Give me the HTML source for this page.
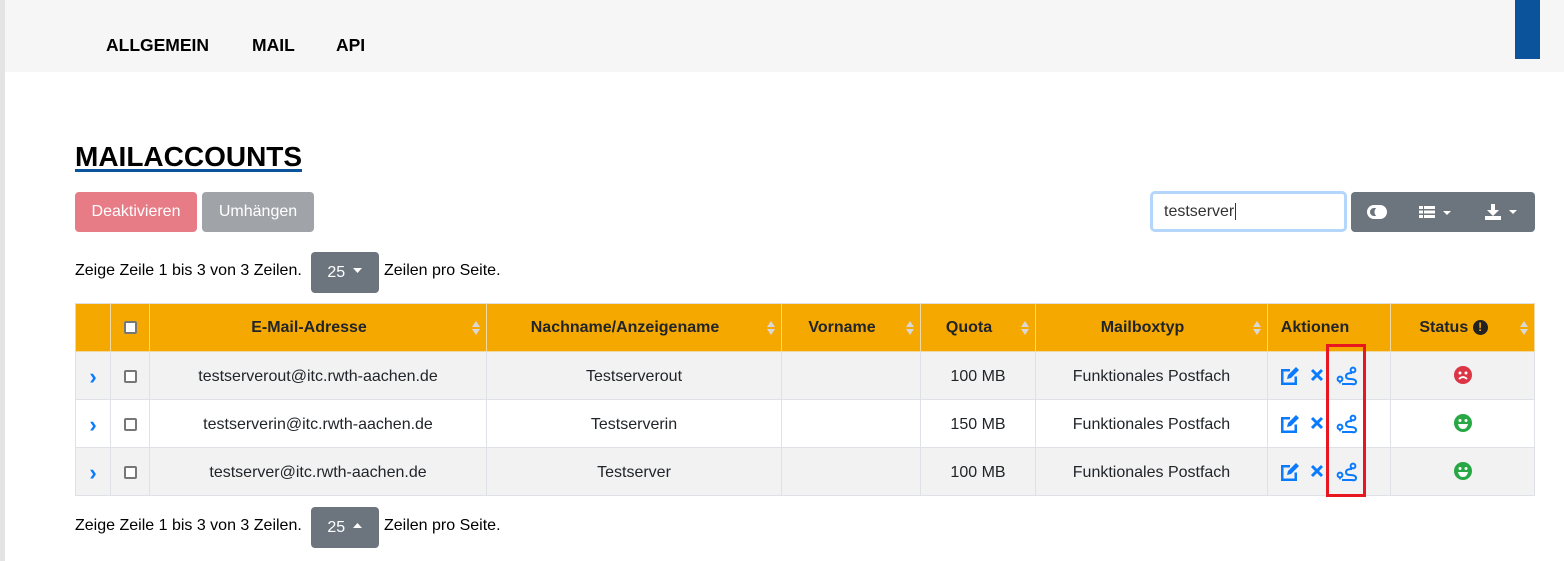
<!DOCTYPE html><html><head><meta charset="utf-8"><style>
*{box-sizing:border-box;margin:0;padding:0}
body{width:1564px;height:561px;position:relative;background:#fff;font-family:"Liberation Sans",sans-serif;color:#212529;overflow:hidden}
.a{position:absolute}
.nav{font-weight:bold;font-size:17.5px;color:#000;top:35px}
table{position:absolute;left:75px;top:303px;border-collapse:collapse;font-size:16px;table-layout:fixed}
td,th{border:1px solid #dee2e6;text-align:center;padding:0;position:relative}
th{background:#f5a800;height:48px;font-weight:bold;border-color:#f0d9a0;border-top:1px solid #dee2e6;padding-right:18px}
th.n{padding-right:0}
tr.r td{height:48px;padding-top:3px}
tr.g td{background:#f2f2f2}
.cb{display:inline-block;width:13px;height:13px;border:2px solid #777;border-radius:2px;background:#fff;vertical-align:middle}
.so{position:absolute;right:6px;top:17px;width:8px;height:14px}
.chev{color:#0a7bff;font-weight:bold;font-size:22px}
.btn{border-radius:4px;color:#fff;font-size:16px;text-align:center}
</style></head><body>
<div class="a" style="left:0;top:0;width:5px;height:561px;background:#e4e4e4"></div>
<div class="a" style="left:5px;top:0;width:1559px;height:72px;background:#f6f6f6"></div>
<div class="a" style="left:1515px;top:0;width:25px;height:59px;background:#0b549c"></div>
<div class="a nav" style="left:106px">ALLGEMEIN</div>
<div class="a nav" style="left:252px">MAIL</div>
<div class="a nav" style="left:336px">API</div>
<div class="a" style="left:75px;top:141px;font-size:28px;font-weight:bold;color:#000">MAILACCOUNTS</div>
<div class="a" style="left:75px;top:169px;width:227px;height:3px;background:#0b549c"></div>
<div class="a btn" style="left:75px;top:192px;width:122px;height:40px;line-height:40px;background:#e77c86">Deaktivieren</div>
<div class="a btn" style="left:202px;top:192px;width:112px;height:40px;line-height:40px;background:#a0a4a9">Umhängen</div>
<div class="a" style="left:1150px;top:191px;width:197px;height:41px;border:3px solid #b5d6fb;border-radius:5px;background:#fff;font-size:16px;line-height:35px;padding-left:11px;color:#333">testserver<span style="border-left:1px solid #333;margin-left:1px"></span></div>
<div class="a" style="left:1351px;top:192px;width:184px;height:40px;background:#6c757d;border-radius:4px"></div>
<svg class="a" style="left:1367px;top:204px" width="20" height="16"><rect x="1.5" y="2.5" width="17" height="11" rx="5.5" fill="none" stroke="#fff" stroke-width="3"/><circle cx="13" cy="8" r="5.5" fill="#fff"/></svg>
<svg class="a" style="left:1418px;top:205px" width="36" height="14"><g fill="#fff"><rect x="1" y="1" width="16" height="3"/><rect x="1" y="5.5" width="16" height="3"/><rect x="1" y="10" width="16" height="3"/><path d="M25 6h8l-4 4z"/></g><g stroke="#6c757d"><line x1="5.5" y1="0" x2="5.5" y2="14"/></g></svg>
<svg class="a" style="left:1484px;top:204px" width="36" height="17"><g fill="#fff"><path d="M7 0h4v6h4l-6 6-6-6h4z"/><rect x="1" y="12" width="16" height="4"/><path d="M25 6h8l-4 4z"/></g></svg>
<div class="a" style="left:75px;top:262px;font-size:16px;color:#000">Zeige Zeile 1 bis 3 von 3 Zeilen.</div>
<div class="a btn" style="left:311px;top:252px;width:68px;height:41px;line-height:41px;background:#6c757d">25 <svg width="10" height="6" style="margin-left:3px;vertical-align:3px"><path d="M0 0h9l-4.5 5z" fill="#fff"/></svg></div>
<div class="a" style="left:384px;top:262px;font-size:16px;color:#000">Zeilen pro Seite.</div>
<table>
<colgroup><col style="width:35px"><col style="width:39px"><col style="width:337px"><col style="width:295px"><col style="width:139px"><col style="width:115px"><col style="width:232px"><col style="width:123px"><col style="width:144px"></colgroup>
<tr><th class="n"></th><th class="n"><span class="cb"></span></th><th>E-Mail-Adresse<svg class="so"><path d="M4 0L8 6H0z M4 14L8 8H0z" fill="#d8d8d8"/></svg></th><th>Nachname/Anzeigename<svg class="so"><path d="M4 0L8 6H0z M4 14L8 8H0z" fill="#d8d8d8"/></svg></th><th>Vorname<svg class="so"><path d="M4 0L8 6H0z M4 14L8 8H0z" fill="#d8d8d8"/></svg></th><th>Quota<svg class="so"><path d="M4 0L8 6H0z M4 14L8 8H0z" fill="#d8d8d8"/></svg></th><th>Mailboxtyp<svg class="so"><path d="M4 0L8 6H0z M4 14L8 8H0z" fill="#d8d8d8"/></svg></th><th style="padding-right:28px">Aktionen</th><th>Status <span style="display:inline-block;width:15px;height:15px;border-radius:50%;background:#222;color:#f5a800;font-size:12px;line-height:15px;vertical-align:1px">!</span><svg class="so"><path d="M4 0L8 6H0z M4 14L8 8H0z" fill="#d8d8d8"/></svg></th></tr>
<tr class="r g"><td class="chev">›</td><td><span class="cb"></span></td><td>testserverout@itc.rwth-aachen.de</td><td>Testserverout</td><td></td><td>100 MB</td><td>Funktionales Postfach</td><td></td><td><svg width="20" height="20"><circle cx="10" cy="10" r="9" fill="#dc3545"/><circle cx="7" cy="8" r="1.5" fill="#fff"/><circle cx="13" cy="8" r="1.5" fill="#fff"/><path d="M6 14q4-4 8 0" stroke="#fff" stroke-width="1.8" fill="none"/></svg></td></tr>
<tr class="r"><td class="chev">›</td><td><span class="cb"></span></td><td>testserverin@itc.rwth-aachen.de</td><td>Testserverin</td><td></td><td>150 MB</td><td>Funktionales Postfach</td><td></td><td><svg width="20" height="20"><circle cx="10" cy="10" r="9" fill="#28a745"/><circle cx="7" cy="7.5" r="1.5" fill="#fff"/><circle cx="13" cy="7.5" r="1.5" fill="#fff"/><path d="M5 11h10q-1 5-5 5t-5-5z" fill="#fff"/></svg></td></tr>
<tr class="r g"><td class="chev">›</td><td><span class="cb"></span></td><td>testserver@itc.rwth-aachen.de</td><td>Testserver</td><td></td><td>100 MB</td><td>Funktionales Postfach</td><td></td><td><svg width="20" height="20"><circle cx="10" cy="10" r="9" fill="#28a745"/><circle cx="7" cy="7.5" r="1.5" fill="#fff"/><circle cx="13" cy="7.5" r="1.5" fill="#fff"/><path d="M5 11h10q-1 5-5 5t-5-5z" fill="#fff"/></svg></td></tr>
</table>
<svg class="a" style="left:1278px;top:364px" width="90" height="120">
<defs><g id="ic">
<path d="M3 3h9v2.5H5.5v11h11v-6H19v8.5H3z" fill="#0a7bff"/><path d="M9 13l1-4 8-8 3 3-8 8z" fill="#0a7bff"/>
<path d="M34 4l10 10M44 4L34 14" stroke="#0a7bff" stroke-width="3"/>
<circle cx="62" cy="13" r="2.4" fill="none" stroke="#0a7bff" stroke-width="2"/><path d="M60.5 15.5l1.5 2.5 1.5-2.5" fill="#0a7bff"/>
<circle cx="75" cy="4" r="2.4" fill="none" stroke="#0a7bff" stroke-width="2"/>
<path d="M74 7q-6 0-6 3t4 3q6 0 6 3t-4 2H64" stroke="#0a7bff" stroke-width="2" fill="none"/>
</g></defs>
<use href="#ic" y="2"/><use href="#ic" y="50"/><use href="#ic" y="98"/>
</svg>
<div class="a" style="left:1326px;top:344px;width:40px;height:153px;border:3px solid #e8161e"></div>
<div class="a" style="left:75px;top:517px;font-size:16px;color:#000">Zeige Zeile 1 bis 3 von 3 Zeilen.</div>
<div class="a btn" style="left:311px;top:507px;width:68px;height:41px;line-height:41px;background:#6c757d">25 <svg width="10" height="6" style="margin-left:3px;vertical-align:3px"><path d="M0 5h9l-4.5-5z" fill="#fff"/></svg></div>
<div class="a" style="left:384px;top:517px;font-size:16px;color:#000">Zeilen pro Seite.</div>
</body></html>
